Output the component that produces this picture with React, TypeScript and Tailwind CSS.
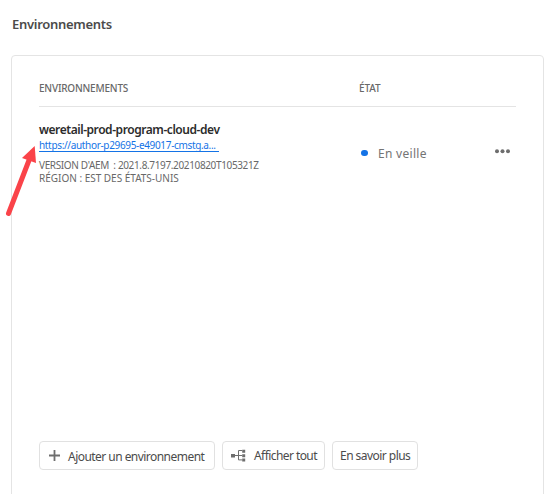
export default function App() {
  return (
    <div className="relative flex h-[494px] w-[544px] flex-col overflow-hidden bg-white pl-[11px] font-['Noto_Sans','Open_Sans',sans-serif] text-[#6e6e6e]">
      <h1 className="mt-[14px] h-[20px] pl-px whitespace-nowrap text-[13px] leading-[20px] font-semibold tracking-[-0.3px] text-[#4b4b4b]">Environnements</h1>
      <section className="mt-[21px] flex h-[460px] w-[533px] shrink-0 flex-col rounded-[4px] border border-[#e4e4e4] pr-[26px] pl-[27px]">
        <div className="flex h-[51px] w-[477px] shrink-0 border-b border-[#e4e4e4] pt-[25px] text-[10px] leading-[14px] font-medium text-[#686868]">
          <span className="w-[320px] tracking-[-0.2px]">ENVIRONNEMENTS</span>
          <span className="tracking-[-0.1px]">ÉTAT</span>
        </div>
        <div className="flex h-[334px] shrink-0 whitespace-nowrap">
          <div className="w-[322px] pt-[14px]">
            <div className="h-[18px] text-[12px] leading-[18px] font-semibold tracking-[-0.44px] text-[#2c2c2c]">weretail-prod-program-cloud-dev</div>
            <a className="block h-[13px] w-[180px] border-b border-[#1473e6] text-[10px] leading-[12px] tracking-[-0.34px] text-[#1473e6]">https://author-p29695-e49017-cmstg.a...</a>
            <div className="mt-[7px] text-[10px] leading-[13px] whitespace-pre text-[#686868]">
              <div className="tracking-[-0.36px]">VERSION D'AEM  : 2021.8.7197.20210820T105321Z</div>
              <div className="tracking-[-0.01px]">RÉGION : EST DES ÉTATS-UNIS</div>
            </div>
          </div>
          <div className="mt-[36px] flex h-[20px] items-center text-[12px] text-[#747474]">
            <span className="mt-[-1px] mr-[10px] h-[6px] w-[7px] rounded-full bg-[#1473e6]" />
            <span className="pt-[2px] tracking-[0.3px]">En veille</span>
          </div>
          <svg className="mt-[42px] mr-[7px] ml-auto" width="15" height="5" fill="#6e6e6e"><circle cx="2" cy="2.3" r="2" /><circle cx="7.5" cy="2.3" r="2" /><circle cx="13" cy="2.3" r="2" /></svg>
        </div>
        <div className="flex shrink-0 gap-[7px] text-[12px] leading-[18px] whitespace-nowrap text-[#4b4b4b]">
          <button className="flex h-[29px] w-[176px] items-center rounded-[4px] border border-[#e1e1e1] pl-[9px]">
            <svg width="11" height="11" stroke="#6e6e6e" strokeWidth="1.8"><path d="M5.5 0v11M0 5.5h11" /></svg>
            <span className="ml-[8px] pt-[2px] tracking-[-0.54px]">Ajouter un environnement</span>
          </button>
          <button className="flex h-[29px] w-[103px] items-center rounded-[4px] border border-[#e1e1e1] pl-[8px]">
            <svg width="15" height="13" fill="#6e6e6e"><path d="M0 5h4v3.6H0zM11.2 .8h3v3H11.2zM11.2 5.2h3V8.2H11.2zM11.2 9.6h3v2.8H11.2z" /><path d="M4 6.5h7M11 1.5H7.5v9.4H11" fill="none" stroke="#6e6e6e" /></svg>
            <span className="ml-[8px] tracking-[-0.57px]">Afficher tout</span>
          </button>
          <button className="flex h-[29px] w-[86px] items-center rounded-[4px] border border-[#e1e1e1] pl-[7px]">
            <span className="tracking-[-0.54px]">En savoir plus</span>
          </button>
        </div>
      </section>
      <svg className="pointer-events-none absolute top-[144px] left-0" width="42" height="76" viewBox="0 144 42 76"><path d="M8.5 213.5L29.5 159" stroke="#fa4349" strokeWidth="5" strokeLinecap="round" /><path d="M34.7 146L22 158l14 5z" fill="#fa4349" /></svg>
    </div>
  )
}
